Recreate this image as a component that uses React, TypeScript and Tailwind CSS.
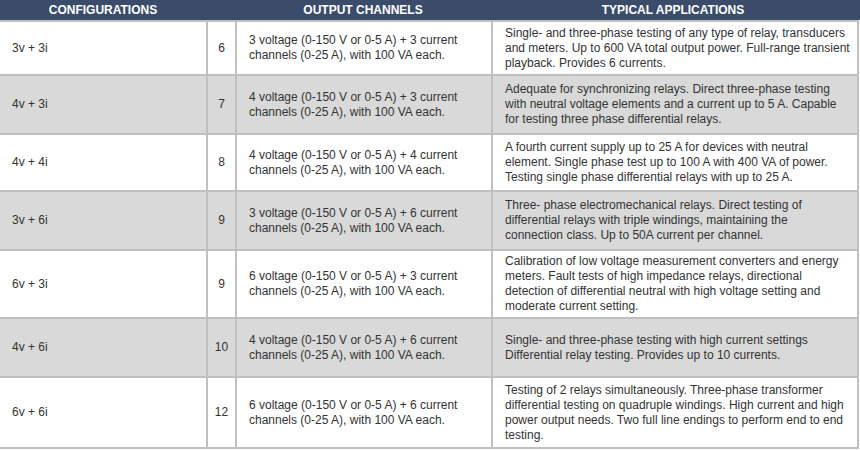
import React from "react";

const rows: { cfg: string; n: string; out: string; app: React.ReactNode }[] = [
  {
    cfg: "3v + 3i",
    n: "6",
    out: "3 voltage (0-150 V or 0-5 A) + 3 current channels (0-25 A), with 100 VA each.",
    app: "Single- and three-phase testing of any type of relay, transducers and meters. Up to 600 VA total output power. Full-range transient playback. Provides 6 currents.",
  },
  {
    cfg: "4v + 3i",
    n: "7",
    out: "4 voltage (0-150 V or 0-5 A) + 3 current channels (0-25 A), with 100 VA each.",
    app: "Adequate for synchronizing relays. Direct three-phase testing with neutral voltage elements and a current up to 5 A. Capable for testing three phase differential relays.",
  },
  {
    cfg: "4v + 4i",
    n: "8",
    out: "4 voltage (0-150 V or 0-5 A) + 4 current channels (0-25 A), with 100 VA each.",
    app: "A fourth current supply up to 25 A for devices with neutral element. Single phase test up to 100 A with 400 VA of power. Testing single phase differential relays with up to 25 A.",
  },
  {
    cfg: "3v + 6i",
    n: "9",
    out: "3 voltage (0-150 V or 0-5 A) + 6 current channels (0-25 A), with 100 VA each.",
    app: (
      <>
        Three- phase electromechanical relays. Direct testing of differential relays with triple windings, maintaining the
        <br />
        connection class. Up to 50A current per channel.
      </>
    ),
  },
  {
    cfg: "6v + 3i",
    n: "9",
    out: "6 voltage (0-150 V or 0-5 A) + 3 current channels (0-25 A), with 100 VA each.",
    app: "Calibration of low voltage measurement converters and energy meters. Fault tests of high impedance relays, directional detection of differential neutral with high voltage setting and moderate current setting.",
  },
  {
    cfg: "4v + 6i",
    n: "10",
    out: "4 voltage (0-150 V or 0-5 A) + 6 current channels (0-25 A), with 100 VA each.",
    app: "Single- and three-phase testing with high current settings Differential relay testing. Provides up to 10 currents.",
  },
  {
    cfg: "6v + 6i",
    n: "12",
    out: "6 voltage (0-150 V or 0-5 A) + 6 current channels (0-25 A), with 100 VA each.",
    app: "Testing of 2 relays simultaneously. Three-phase transformer differential testing on quadruple windings. High current and high power output needs. Two full line endings to perform end to end testing.",
  },
];

export default function App() {
  return (
    <div
      className="w-[860px] h-[450px] bg-white text-[12px] text-[#333333]"
      style={{ fontFamily: '"Liberation Sans", Arial, sans-serif' }}
    >
      <div className="h-[20px] w-[860px] bg-[#3b4c6b] grid grid-cols-[206px_29px_256px_369px] items-center font-bold text-white text-[12px]">
        <div className="text-center">CONFIGURATIONS</div>
        <div />
        <div className="text-center">OUTPUT CHANNELS</div>
        <div className="text-center pr-[5px]">TYPICAL APPLICATIONS</div>
      </div>
      <div className="w-[859px] grid grid-cols-[206px_27px_254px_364px] grid-rows-[52px_57px_55px_57px_66px_57px_69px] gap-[2px] bg-[#c0c0c0] py-[2px] pr-[2px]">
        {rows.map((r, i) => {
          const bg = i % 2 === 0 ? "bg-white" : "bg-[#d9d9d9]";
          return (
            <React.Fragment key={i}>
              <div className={`${bg} flex items-center pl-[12px] leading-[15px]`}>{r.cfg}</div>
              <div className={`${bg} flex items-center justify-center leading-[15px]`}>{r.n}</div>
              <div className={`${bg} flex items-center pl-[12px] pr-[4px] leading-[15px]`}>{r.out}</div>
              <div className={`${bg} flex items-center pl-[12px] pr-[4px] leading-[15px]`}>
                <div>{r.app}</div>
              </div>
            </React.Fragment>
          );
        })}
      </div>
    </div>
  );
}
